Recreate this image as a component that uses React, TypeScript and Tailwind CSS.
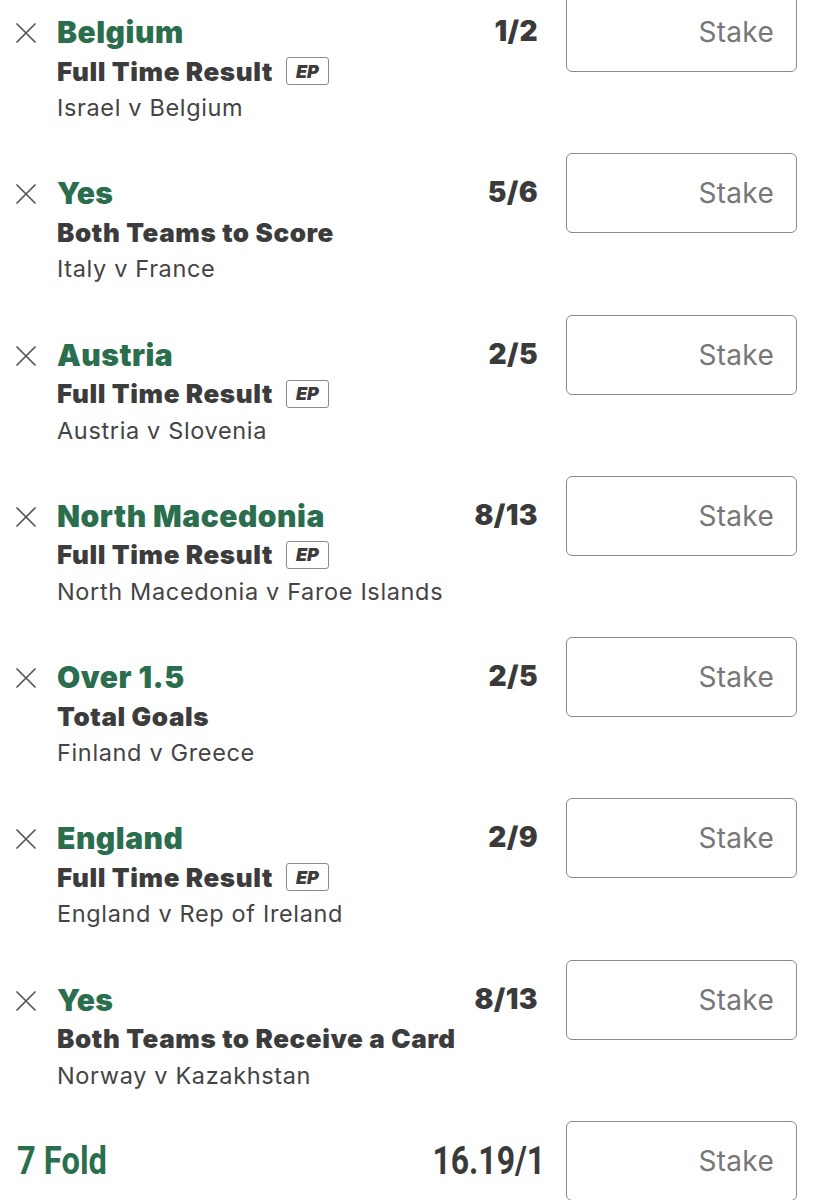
import React from 'react';

type Selection = {
  pick: string;
  market: string;
  match: string;
  odds: string;
  ep?: boolean;
};

const selections: Selection[] = [
  { pick: 'Belgium', market: 'Full Time Result', match: 'Israel v Belgium', odds: '1/2', ep: true },
  { pick: 'Yes', market: 'Both Teams to Score', match: 'Italy v France', odds: '5/6' },
  { pick: 'Austria', market: 'Full Time Result', match: 'Austria v Slovenia', odds: '2/5', ep: true },
  { pick: 'North Macedonia', market: 'Full Time Result', match: 'North Macedonia v Faroe Islands', odds: '8/13', ep: true },
  { pick: 'Over 1.5', market: 'Total Goals', match: 'Finland v Greece', odds: '2/5' },
  { pick: 'England', market: 'Full Time Result', match: 'England v Rep of Ireland', odds: '2/9', ep: true },
  { pick: 'Yes', market: 'Both Teams to Receive a Card', match: 'Norway v Kazakhstan', odds: '8/13' },
];

function CloseIcon() {
  return (
    <svg width="22" height="22" viewBox="0 0 22 22" fill="none" stroke="#555" strokeWidth="1.7" strokeLinecap="round">
      <path d="M2 2 L20 20 M20 2 L2 20" />
    </svg>
  );
}

function StakeBox() {
  return (
    <div className="w-[231px] h-[80px] shrink-0 rounded-[6px] border-[1.5px] border-[#8a8a8a] flex items-center justify-end pr-[22px]">
      <span className="text-[28px] tracking-[0.3px] text-[#777]">Stake</span>
    </div>
  );
}

function SelectionRow({ s }: { s: Selection }) {
  return (
    <div className="h-[161.3px] flex items-start pr-[16px]">
      <div className="w-[57px] shrink-0 pl-[15px] pt-[30px]">
        <CloseIcon />
      </div>
      <div className="flex-1 pt-[23px]">
        <div className="text-[30px] leading-[34px] font-black tracking-[0.5px] text-[#2a6e4e]">{s.pick}</div>
        <div className="flex items-center mt-[4px] h-[36px]">
          <span className="text-[26px] font-black tracking-[0.6px] text-[#3c3c3c]">{s.market}</span>
          {s.ep && (
            <span className="ml-[13px] h-[28px] px-[9px] flex items-center rounded-[3px] border-[1.5px] border-[#8a8a8a] text-[18px] font-black italic text-[#3c3c3c]">
              EP
            </span>
          )}
        </div>
        <div className="text-[23.5px] leading-[38px] tracking-[0.65px] text-[#444]">{s.match}</div>
      </div>
      <div className="pt-[22px] pr-[28px] text-[28px] leading-[34px] font-black tracking-[0.4px] text-[#3a3a3a]">{s.odds}</div>
      <StakeBox />
    </div>
  );
}

export default function App() {
  return (
    <div className="w-[813px] h-[1200px] overflow-hidden bg-white" style={{ fontFamily: 'Inter, "Noto Sans", sans-serif' }}>
      <div className="-mt-[8px]">
        {selections.map((s, i) => (
          <SelectionRow key={i} s={s} />
        ))}
        {/* accumulator row */}
        <div className="flex items-start pr-[16px] pl-[17px]">
          <div className="flex-1 pt-[18px]">
            <div
              className="inline-block origin-left scale-x-[0.86] text-[38px] leading-[44px] font-bold text-[#2a6e4e]"
              style={{ fontFamily: 'Roboto, sans-serif' }}
            >
              7 Fold
            </div>
          </div>
          <div className="pt-[18px] pr-[21px]">
            <div
              className="inline-block origin-right scale-x-[0.84] text-[38px] leading-[44px] font-bold text-[#3a3a3a]"
              style={{ fontFamily: 'Roboto, sans-serif' }}
            >
              16.19/1
            </div>
          </div>
          <StakeBox />
        </div>
      </div>
    </div>
  );
}
